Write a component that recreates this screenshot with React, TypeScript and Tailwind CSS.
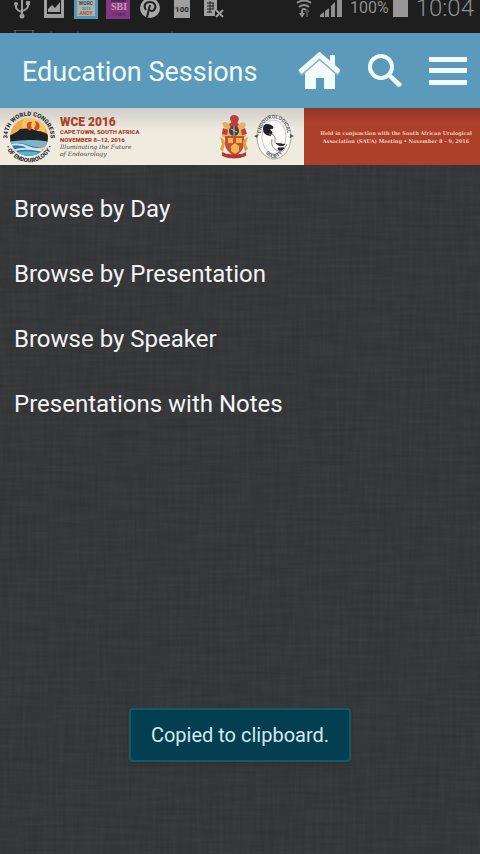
import type { ReactNode } from "react";

const menuItems = [
  "Browse by Day",
  "Browse by Presentation",
  "Browse by Speaker",
  "Presentations with Notes",
];

function StatusCell({ children }: { children: ReactNode }) {
  return <div className="flex w-8 justify-center">{children}</div>;
}

function StatusBar() {
  return (
    <div className="flex h-[33px] justify-between overflow-hidden bg-[#1e1e1e] pl-[6px] pr-[6px] text-[#8f8f8f]">
      <div>
        <div className="flex h-[30px]">
          <StatusCell>
            <svg width="18" height="20" viewBox="0 0 18 20" fill="none" stroke="#9c9c9c" strokeWidth="2">
              <path d="M9 0v16M3 3v4q0 3 6 5M15 2v4q0 3-6 5" />
              <circle cx="9" cy="16" r="2.5" fill="#9c9c9c" stroke="none" />
              <circle cx="3" cy="4" r="2" fill="#9c9c9c" stroke="none" />
              <path d="M13 1h4v4h-4z" fill="#9c9c9c" stroke="none" />
            </svg>
          </StatusCell>
          <StatusCell>
            <svg width="20" height="18" viewBox="0 0 20 18">
              <path d="M0 0h3v14h14V0h3v18H0z" fill="#a0a0a0" />
              <path d="M4 12V9l4-4 3 3 5-6v10z" fill="#a0a0a0" />
            </svg>
          </StatusCell>
          <StatusCell>
            <svg width="24" height="19" viewBox="0 0 24 19" fontFamily="Roboto, sans-serif" fontWeight="700">
              <path d="M0 0h24v19H0z" fill="#5398b5" />
              <path d="M3 0h18v16H3z" fill="#a9b2ad" />
              <text x="12" y="5" fontSize="5" textAnchor="middle" fill="#44484a">WORC</text>
              <text x="12" y="10" fontSize="4" textAnchor="middle" fill="#2a8ea9">2015</text>
              <text x="12" y="15" fontSize="5" textAnchor="middle" fill="#b95038">ANDY</text>
            </svg>
          </StatusCell>
          <StatusCell>
            <svg width="24" height="19" viewBox="0 0 24 19" fontFamily="Liberation Serif, serif" fontWeight="700">
              <path d="M0 0h24v19H0z" fill="#843781" />
              <path d="M5 0h15v2H5z" fill="#4f285c" />
              <text x="13" y="10" fontSize="10" textAnchor="middle" fill="#c49dba">SBI</text>
              <text x="13" y="16" fontSize="5" textAnchor="middle" fill="#432859">CNBT</text>
            </svg>
          </StatusCell>
          <StatusCell>
            <svg width="20" height="18" viewBox="0 0 20 18">
              <circle cx="10" cy="8" r="10" fill="#a8a8a8" />
              <path
                d="M6 10C3 6 5 2 10 2s7 5 4 8q-2 2-4 0M10 5 7 17"
                fill="none"
                stroke="#222"
                strokeWidth="2"
              />
            </svg>
          </StatusCell>
          <StatusCell>
            <svg width="16" height="18" viewBox="0 0 16 18">
              <path d="M0 0h16v18H0z" fill="#a0a0a0" />
              <text x="8" y="12" fontSize="8" fontFamily="Roboto, sans-serif" fontWeight="700" textAnchor="middle" fill="#252525">
                100
              </text>
            </svg>
          </StatusCell>
          <StatusCell>
            <svg width="20" height="18" viewBox="0 0 20 18">
              <path d="M0 0h13v9l-2 2v5H0z" fill="#a0a0a0" />
              <path d="M3 3h7M3 6h7M3 9h7M3 12h5M6 1v12M9 3v6" stroke="#222" fill="none" />
              <path d="m12 10 7 7m0-7-7 7" stroke="#a0a0a0" strokeWidth="2" />
            </svg>
          </StatusCell>
        </div>
        {/* notification row that peeks out under the bar */}
        <svg className="ml-2" width="164" height="3" viewBox="0 0 164 3" fill="none" stroke="#777">
          <path d="M1 3V0h18v3" />
          <path d="M36 2h3M63 2h2M157 2h2" stroke="#4f4f4f" />
        </svg>
      </div>
      <div className="flex gap-2">
        <svg width="16" height="18" viewBox="0 0 16 18" fill="none" stroke="#909090" strokeWidth="2">
          <path d="M1 3q7-5 14 0M3 7q5-4 10 0M6 10q2-2 4 0" />
          <path d="M6 10v6" />
          <path d="M3 13h6l-3 5z" fill="#909090" stroke="none" />
          <path d="M11 17v-5M9 12l2-2 2 2" stroke="#505050" />
        </svg>
        <svg width="22" height="17" viewBox="0 0 22 17" fill="#909090">
          <path d="M0 17v-2l4-3v5zM5 17v-6l4-3v9zM11 17V6l4-4v15zM17 17V0h5v17z" />
        </svg>
        <span className="-mt-[4px] font-['Roboto'] text-[16px] leading-6">100%</span>
        <svg className="-ml-1" width="15" height="17" viewBox="0 0 15 17">
          <path d="M0 0h15v17H0z" fill="#979797" />
        </svg>
        <span className="-mt-[8px] font-['Roboto'] text-[24px] leading-8 font-light">10:04</span>
      </div>
    </div>
  );
}

function Header() {
  return (
    <header className="flex h-[75px] items-center bg-[#5b9aba] pl-[22px] pr-[13px] text-[#f0fcff]">
      <h1 className="flex-1 pt-[2px] text-[27px] leading-9">Education Sessions</h1>
      <div className="flex items-center gap-[27px]">
        <button aria-label="Home">
          <svg width="43" height="38" viewBox="0 0 43 38">
            <path d="M32 3h5v12l-5-5z" fill="currentColor" />
            <path d="M21.500 5 37 20v17H26V26h-8v11H7V20z" fill="currentColor" />
            <path d="M2 22 21.500 5 41 22" fill="none" stroke="#8fb0c2" strokeWidth="5" />
            <path d="M2 20 21.500 3 41 20" fill="none" stroke="currentColor" strokeWidth="5" />
          </svg>
        </button>
        <button aria-label="Search">
          <svg width="34" height="34" viewBox="0 0 34 34" fill="none" stroke="currentColor">
            <circle cx="13" cy="13" r="11" strokeWidth="4" />
            <path d="m20 21 3-1 11 10q-1 3-4 3L20 23z" fill="currentColor" stroke="none" />
          </svg>
        </button>
        <button aria-label="Menu">
          <svg width="38" height="30" viewBox="0 0 38 30" fill="currentColor">
            <path d="M0 1h38v5H0zM0 12h38v5H0zM0 24h38v5H0z" />
          </svg>
        </button>
      </div>
    </header>
  );
}

function CongressLogo() {
  return (
    <svg width="56" height="57" viewBox="0 0 56 57" role="img" aria-label="34th World Congress of Endourology">
      <defs>
        <clipPath id="disc">
          <circle cx="29" cy="29" r="19" />
        </clipPath>
        <path id="ringTop" d="M11 41A21.500 21.500 0 1 1 47 41" />
        <path id="ringBottom" d="M6 39A25 25 0 0 0 52 39" />
      </defs>
      <g clipPath="url(#disc)">
        <path d="M0 0h56v57H0z" fill="#f0a94a" />
        <circle cx="34" cy="18" r="12" fill="#f6c75e" />
        <path d="M8 28q9-3 12-7 6-1 12 0l6 2q6 0 13 6v7H8z" fill="#202326" />
        <path d="M8 34q20-4 44 0v4H8z" fill="#79b5cc" />
        <path d="M8 37q10-4 20 0t24 0v14H8z" fill="#3173ae" />
        <path d="M8 38q10-4 20 1t24-2M12 43q14-5 34 1" stroke="#d6e5ea" strokeWidth="2" fill="none" />
        <path d="M14 45q13-4 32 1v5H14z" fill="#58b4c8" />
      </g>
      <path d="M32 14c-6-2-7 6-2 9l2-3q-2-2 0-6M35 13c6 1 6 8 1 10l-2-3q3-2 1-7" fill="#cf4b31" />
      <g fontFamily="Roboto, sans-serif" fontSize="6" fontWeight="900" fill="#33343a">
        <text>
          <textPath href="#ringTop" startOffset="50%" textAnchor="middle">34TH WORLD CONGRESS</textPath>
        </text>
        <text>
          <textPath href="#ringBottom" startOffset="50%" textAnchor="middle">• OF ENDOUROLOGY •</textPath>
        </text>
      </g>
    </svg>
  );
}

function Crest() {
  return (
    <svg width="30" height="46" viewBox="0 0 30 46">
      <path d="M11 5q0-4 4-4t5 4l-2 5h-5z" fill="#bc3f3c" />
      <path d="M3 9q5-3 8 2l4-2 5 2q3-5 7-1-1 5-4 5 5 3 4 8l-5 1H8l-5-1q-2-5 4-8-3-2-4-6" fill="#ddb45f" />
      <path d="M10 10q5-4 10 0l-2 4h-6zM4 14l5 2-1 5-5-1zM22 16l4-2 2 6-5 1z" fill="#c9393b" />
      <path d="M6 22h19v9q-1 7-9 11-9-4-10-11z" fill="#ca4d35" />
      <path d="M9 24h5v5H9zM17 24h6v5h-6zM12 32l4-3 4 3v5l-4 3-4-3z" fill="#edb94e" />
      <circle cx="15" cy="17" r="5" fill="#454040" />
      <path d="M15 12v10M12 15l6 3" stroke="#c7c2b9" />
      <path d="M1 23q5 2 5 6l-2 9-3-3 2-5zM29 23q-5 2-5 6l2 9 3-3-2-5z" fill="#dba344" />
      <path d="M3 38q6 3 12 2 8 1 12-2v4q-12 5-24 0z" fill="#b43735" />
    </svg>
  );
}

function SocietySeal() {
  return (
    <svg width="40" height="46" viewBox="0 0 40 46" role="img" aria-label="Endourological Society">
      <ellipse cx="20" cy="23" rx="17" ry="22" fill="#fbfaf7" stroke="#a5a5a7" />
      <ellipse cx="20" cy="23" rx="12" ry="17" fill="none" stroke="#c6c6c6" />
      <defs>
        <path id="sealTop" d="M7 27C3-3 37-3 33 27" />
        <path id="sealBottom" d="M6 30Q20 58 34 30" />
      </defs>
      <g fontFamily="Roboto, sans-serif" fontSize="5" fontWeight="700" fill="#55565a">
        <text>
          <textPath href="#sealTop" startOffset="50%" textAnchor="middle">ENDOUROLOGICAL</textPath>
        </text>
        <text>
          <textPath href="#sealBottom" startOffset="50%" textAnchor="middle">SOCIETY</textPath>
        </text>
      </g>
      <path
        d="M17 12q-7-3-7 3 0 5 6 6 3-2 0-4-2-2 1-3 3 0 0-2"
        fill="#202024"
        stroke="#202024"
        strokeWidth="2"
      />
      <path d="M15 20q7 0 6 6t7 3M18 25q-2 9 6 12h5l4-7" stroke="#8a8a8c" fill="none" />
      <path d="M22 29q5 5 9 1M24 34h6l-2 2h-3z" fill="#252527" stroke="#252527" />
      <path d="m0 22 5-2-2 4zM36 20l4 2-4 2z" fill="#55565a" />
    </svg>
  );
}

function Banner() {
  return (
    <section className="grid h-[57px] grid-cols-[304fr_176fr]">
      <div className="flex items-center justify-between bg-linear-to-b from-[#d0cec8] to-[#f0ebdf] to-40% pr-[10px]">
        <div className="flex items-center gap-1">
          <CongressLogo />
          <div className="font-bold text-[#ac412d]">
            <p className="text-[12px] font-black leading-[12px]">WCE 2016</p>
            <p className="text-[6px] font-black leading-[8px]">CAPE TOWN, SOUTH AFRICA</p>
            <p className="text-[6px] font-black leading-[7px]">NOVEMBER 8–12, 2016</p>
            <p className="font-['DejaVu_Serif',serif] text-[6px] font-normal italic leading-[7px] text-[#44413e]">
              Illuminating the Future
              <br />
              of Endourology
            </p>
          </div>
        </div>
        <div className="flex items-center gap-[5px]">
          <Crest />
          <SocietySeal />
        </div>
      </div>
      <div className="flex items-center justify-center bg-linear-to-b from-[#8f3526] to-[#ac402a] to-25% pl-2">
        <p className="whitespace-nowrap text-center font-['DejaVu_Serif',serif] text-[5px] font-bold leading-[8px] text-[#f3cbb9]">
          Held in conjunction with the South African Urological
          <br />
          Association (SAUA) Meeting • November 8 – 9, 2016
        </p>
      </div>
    </section>
  );
}

function Linen() {
  return (
    <svg className="absolute inset-0 h-full w-full" aria-hidden="true">
      <filter id="threadsX">
        <feTurbulence type="fractalNoise" baseFrequency="0.02 0.3" numOctaves="2" seed="4" />
        <feColorMatrix values="0 0 0 0 0  0 0 0 0 0  0 0 0 0 0  1 0 0 0 -0.3" />
      </filter>
      <filter id="threadsY">
        <feTurbulence type="fractalNoise" baseFrequency="0.3 0.02" numOctaves="2" seed="9" />
        <feColorMatrix values="0 0 0 0 0  0 0 0 0 0  0 0 0 0 0  1 0 0 0 -0.3" />
      </filter>
      <rect width="100%" height="100%" filter="url(#threadsX)" opacity="0.14" />
      <rect width="100%" height="100%" filter="url(#threadsY)" opacity="0.11" />
    </svg>
  );
}

export default function App() {
  return (
    <div className="flex min-h-screen flex-col bg-[#3a3b3d] font-['Roboto',sans-serif]">
      <StatusBar />
      <Header />
      <Banner />
      <main className="relative flex flex-1 flex-col justify-between pb-[92px] pt-[11px]">
        <Linen />
        <ul className="relative">
          {menuItems.map((item) => (
            <li key={item}>
              <a href="#" className="flex h-[65px] items-center px-[14px] text-[24px] leading-8 text-[#f4f4f4]">
                {item}
              </a>
            </li>
          ))}
        </ul>
        <div
          role="status"
          className="relative flex h-[54px] items-center self-center rounded-[4px] border-2 border-[#14596a] bg-[#033f50] px-5 text-[20px] leading-6 text-[#d5e8ee] shadow-md"
        >
          Copied to clipboard.
        </div>
      </main>
    </div>
  );
}
